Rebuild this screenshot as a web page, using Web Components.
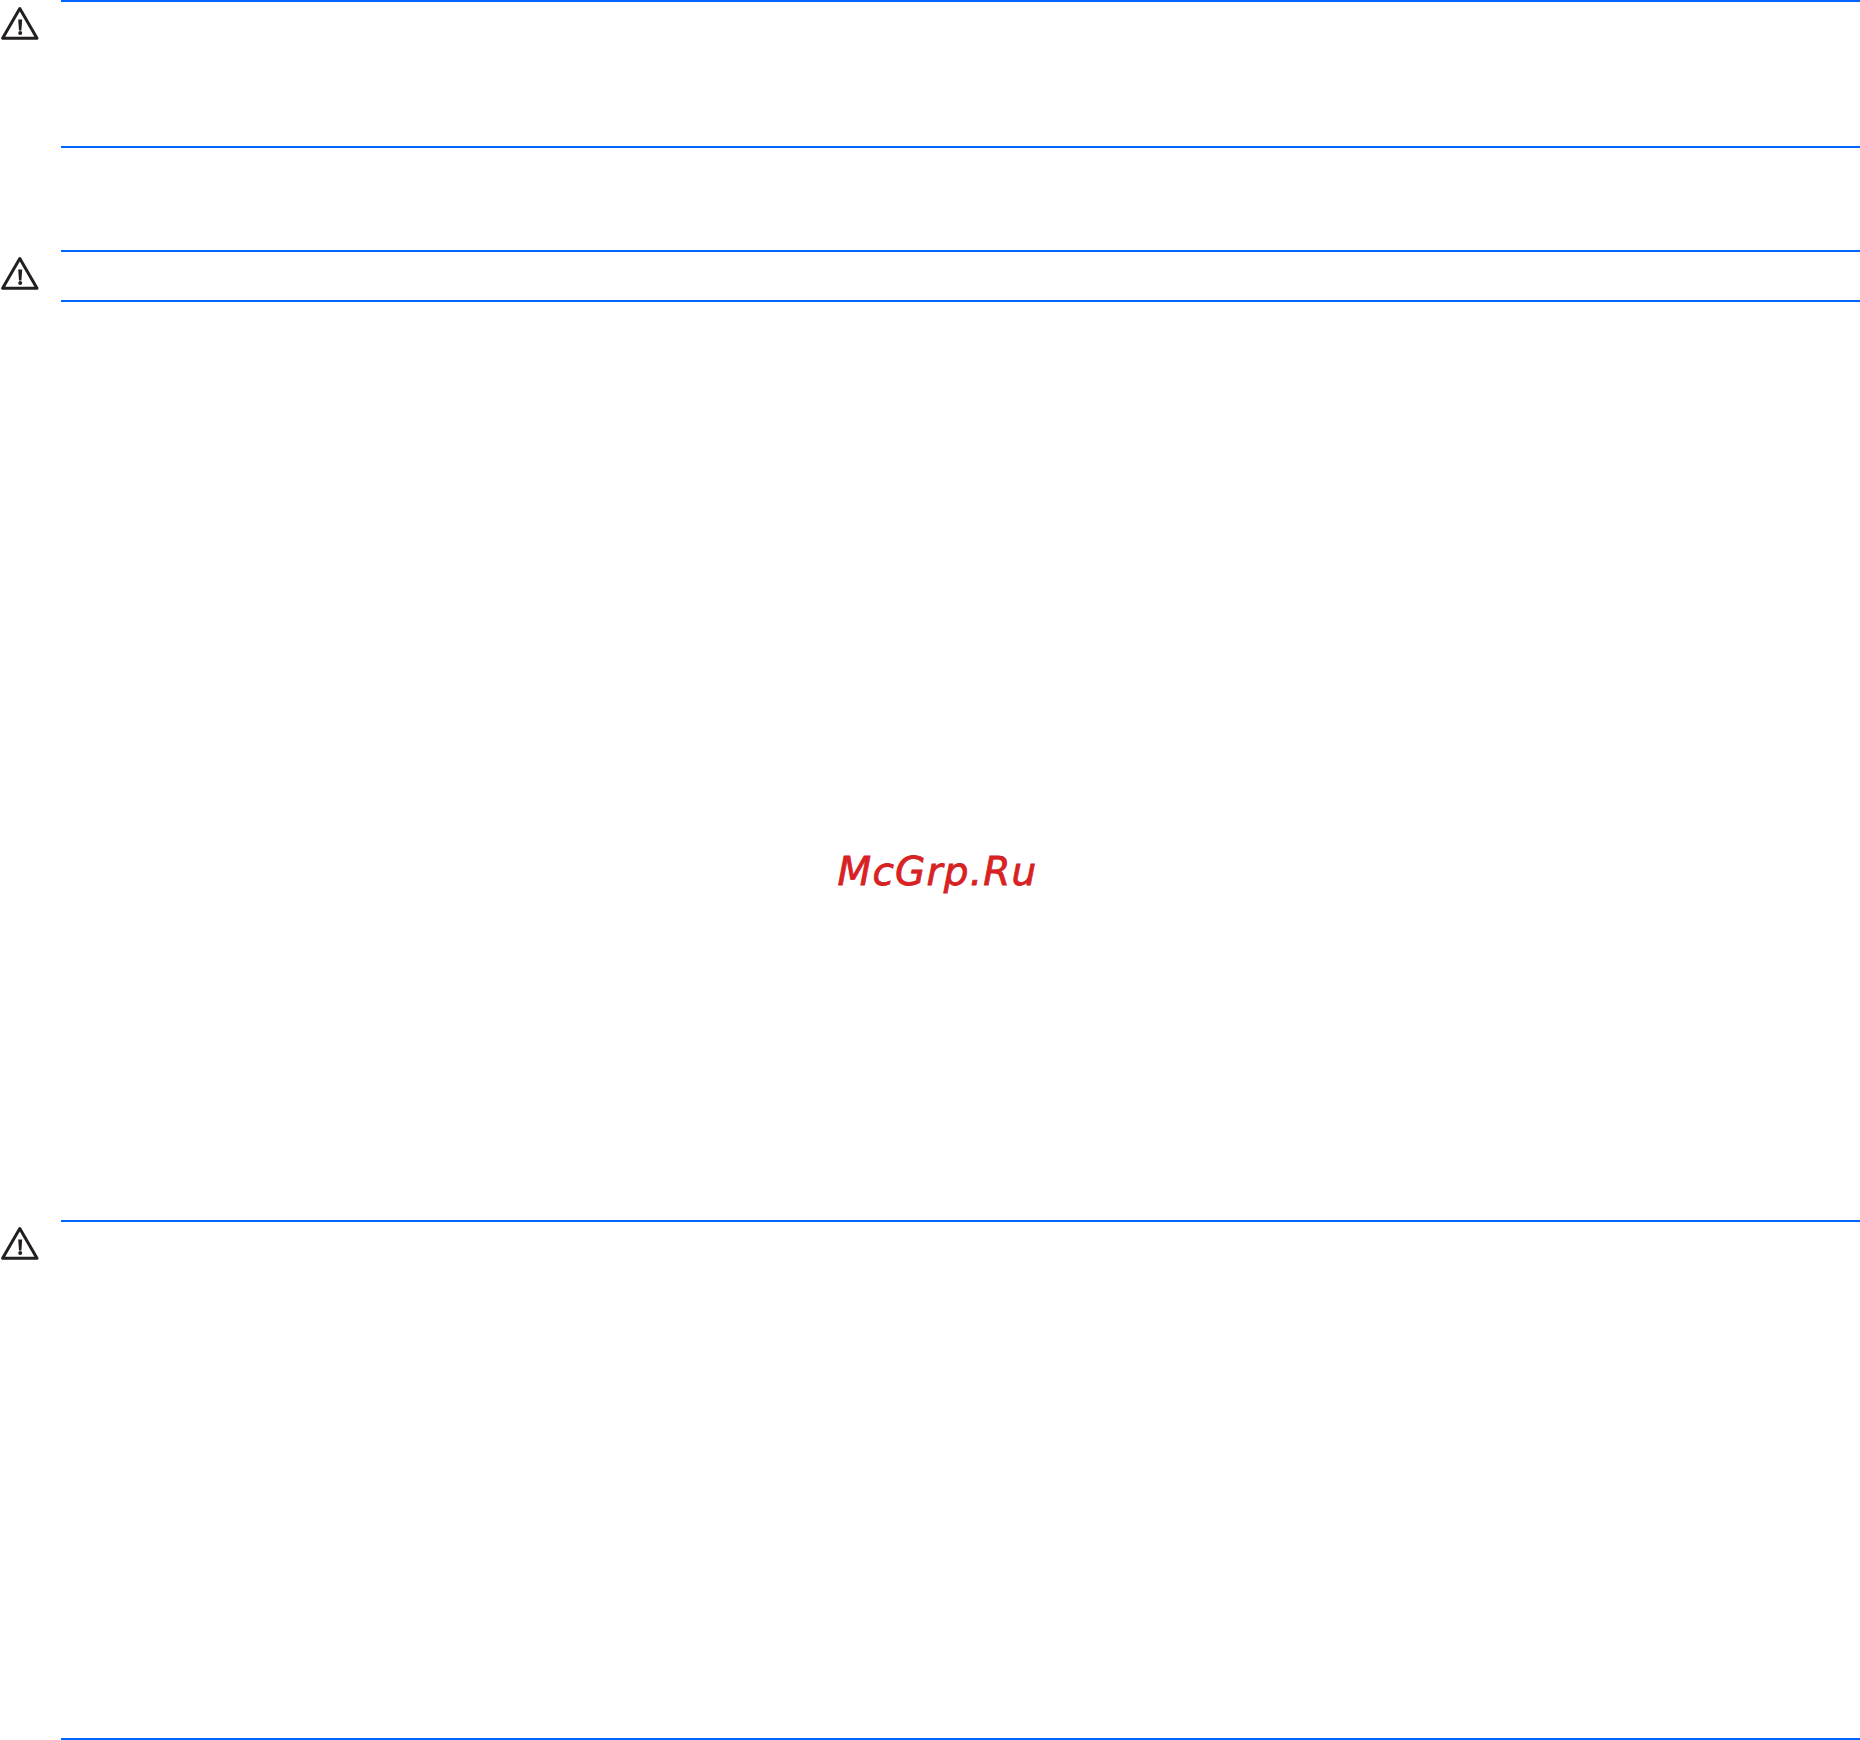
<!DOCTYPE html>
<html>
<head>
<meta charset="utf-8">
<title>McGrp.Ru</title>
<style>
  html, body { margin: 0; background: #fff; }
  body { width: 1860px; height: 1740px; overflow: hidden; }
</style>
</head>
<body>
<manual-page>
  <warning-note style="height:148px"></warning-note>
  <warning-note style="height:52px;margin-top:102px"></warning-note>
  <warning-note style="height:520px;margin-top:918px"></warning-note>
  <page-mark>McGrp.Ru</page-mark>
</manual-page>
<script>
class ManualPage extends HTMLElement {
  constructor() {
    super();
    this.attachShadow({ mode: "open" });
    this.shadowRoot.innerHTML = `
      <style>
        :host { display: flex; flex-direction: column; position: relative; width: 1860px; height: 1740px; }
      </style>
      <slot></slot>
    `;
  }
}

class WarningNote extends HTMLElement {
  constructor() {
    super();
    this.attachShadow({ mode: "open" });
    this.shadowRoot.innerHTML = `
      <style>
        :host { display: grid; grid-template-columns: 61px 1fr; box-sizing: border-box; flex: none; }
        svg { display: block; margin-top: 6px; }
        .body { border-top: 2px solid #0066ff; border-bottom: 2px solid #0066ff; }
      </style>
      <svg width="40" height="36" viewBox="0 0 40 36" fill="none">
        <path d="M19.8 2.6 L2.6 32.2 H37 Z" stroke="#231f20" stroke-width="3" stroke-linejoin="round"/>
        <path d="M18.2 13.6 H22.2 L21.4 24.4 H19 Z" fill="#231f20"/>
        <circle cx="20.2" cy="26.9" r="2" fill="#231f20"/>
      </svg>
      <div class="body"><slot></slot></div>
    `;
  }
}

// watermark sits over the page, centred on it
class PageMark extends HTMLElement {
  constructor() {
    super();
    this.attachShadow({ mode: "open" });
    this.shadowRoot.innerHTML = `
      <style>
        :host {
          position: absolute; inset: 0;
          display: flex; justify-content: center; align-items: center;
          font: oblique 39px "DejaVu Sans", sans-serif;
          letter-spacing: 1.2px;
          color: #e02020;
          -webkit-text-stroke: 0.8px #c9242a;
          padding: 3px 0 0 15px;
          box-sizing: border-box;
        }
      </style>
      <slot></slot>
    `;
  }
}

customElements.define("manual-page", ManualPage);
customElements.define("warning-note", WarningNote);
customElements.define("page-mark", PageMark);
</script>
</body>
</html>
